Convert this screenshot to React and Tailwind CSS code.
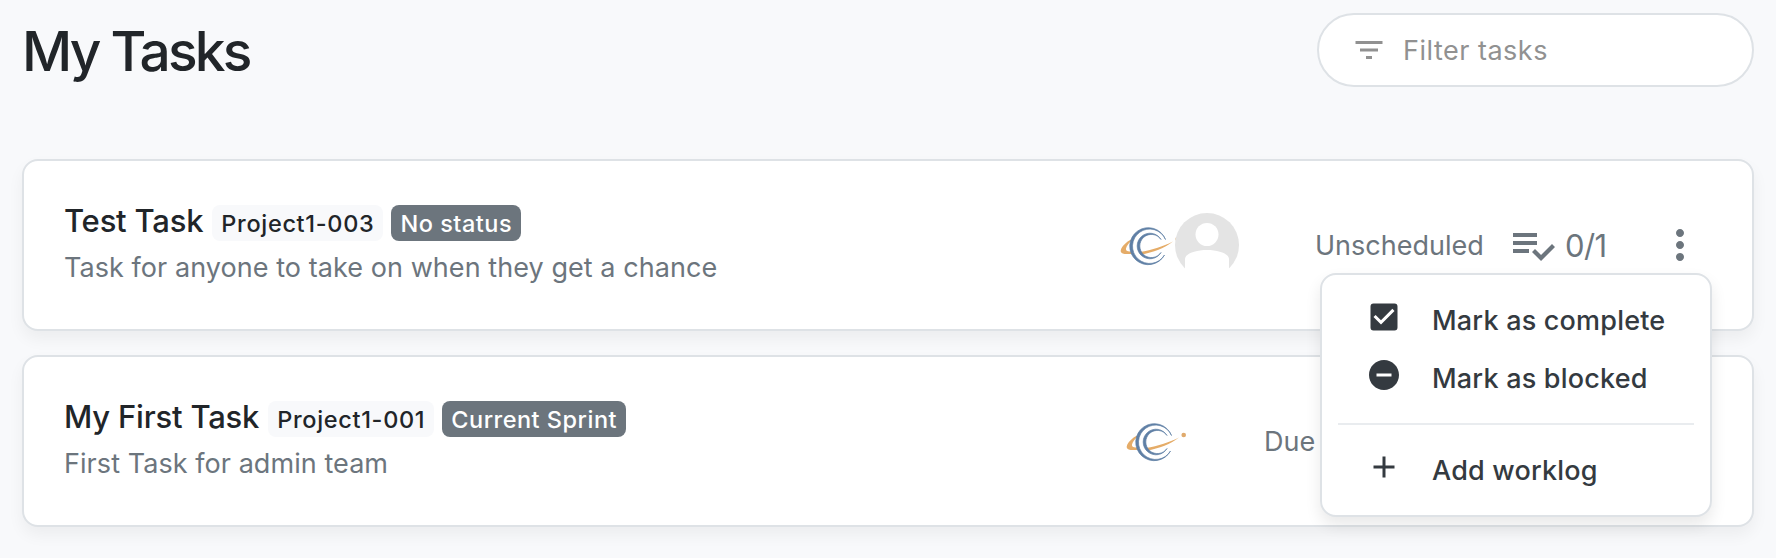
import {
  MdAdd,
  MdCheckBox,
  MdFilterList,
  MdMoreVert,
  MdRemoveCircle,
} from "react-icons/md";

const tasks = [
  {
    id: 1,
    title: "Test Task",
    code: "Project1-003",
    status: "No status",
    description: "Task for anyone to take on when they get a chance",
    due: "Unscheduled",
    progress: "0/1",
    unassigned: true,
  },
  {
    id: 2,
    title: "My First Task",
    code: "Project1-001",
    status: "Current Sprint",
    description: "First Task for admin team",
    due: "Due",
    unassigned: false,
  },
];

function TeamLogo() {
  return (
    <svg viewBox="0 0 64 64" className="h-16 w-16 shrink-0">
      {/* back of the orbit */}
      <path
        d="M16 25.500 C8 29 3 35.500 3.800 38.800 C4.600 41.500 10 41.500 17 40.500 L17 38 C11 39 8.500 38 9 35.500 C9.500 33 12 29.500 16 26.500 Z"
        fill="#e5ac68"
      />
      <circle cx="32" cy="32.700" r="18" fill="#fff" />
      {/* front of the orbit */}
      <path d="M23 39 C35 37 47 33 56 28.500 C48 35 36 39.500 24 41.500 Z" fill="#e5ac68" />
      <g fill="#5f7fa5" stroke="#5f7fa5" strokeWidth="0.7">
        <path d="M48.500 26.500 A18.500 18.500 0 1 0 47.500 42 A17.200 17.200 0 1 1 48.500 26.500 Z" />
        <path d="M44 26.500 A12.800 12.800 0 1 0 44 39.500 A11.600 11.600 0 1 1 44 26.500 Z" />
      </g>
      <circle cx="60.700" cy="26" r="2.300" fill="#e0aa6c" />
    </svg>
  );
}

function UnassignedAvatar() {
  return (
    <svg viewBox="0 0 64 64" className="h-16 w-16 shrink-0">
      <circle cx="32" cy="32" r="32" fill="#e4e4e4" />
      <circle cx="32" cy="21.500" r="11.500" fill="#fff" />
      <path d="M10 64V46C10 41 20 37 32 37S54 41 54 46V64Z" fill="#fff" />
    </svg>
  );
}

function ChecklistIcon() {
  return (
    <svg viewBox="0 0 24 24" fill="currentColor" className="h-12 w-12 shrink-0">
      <path d="M14 10H2v2h12v-2zm0-4H2v2h12V6zM2 16h8v-2H2v2zm19.5-4.5L23 13l-6.99 7-4.51-4.5L13 14l3.01 3 5.49-5.5z" />
    </svg>
  );
}

function MenuItem({ icon: Icon, label }) {
  return (
    <button className="flex h-[58px] w-full items-center pl-11">
      <Icon size={36} className="-mt-1.5" />
      <span className="mt-0.5 ml-[30px] whitespace-nowrap">{label}</span>
    </button>
  );
}

function TaskMenu() {
  return (
    <div className="absolute top-[112px] right-[40px] z-10 h-[244px] w-[392px] rounded-2xl border-2 border-[#dee2e6] bg-white pt-4 text-[27px] font-medium tracking-[0.2px] text-[#343a40] shadow-[0_8px_16px_rgba(0,0,0,0.09)]">
      <MenuItem icon={MdCheckBox} label="Mark as complete" />
      <MenuItem icon={MdRemoveCircle} label="Mark as blocked" />
      <hr className="mx-4 my-4 border-t-2 border-[#e9ecef]" />
      <MenuItem icon={MdAdd} label="Add worklog" />
    </div>
  );
}

function TaskCard({ task, menuOpen }) {
  return (
    <article
      className={`relative flex h-[172px] rounded-2xl border-2 border-[#dee2e6] bg-white pl-[40px] shadow-[0_8px_16px_rgba(0,0,0,0.05)] ${
        menuOpen ? "z-10" : ""
      }`}
    >
      <div className="flex-1 pt-[40px]">
        <div className="flex h-[44px] items-center">
          <h2 className="-mt-1 text-[31px] font-medium tracking-[-0.2px] whitespace-nowrap text-[#212529]">
            {task.title}
          </h2>
          <span className="ml-[9px] flex h-9 items-center rounded-lg bg-[#f8f9fb] px-[9px] pt-0.5 text-[23.5px] font-medium tracking-[0.68px] whitespace-nowrap text-[#212529]">
            {task.code}
          </span>
          <span className="ml-2 flex h-9 items-center rounded-lg bg-[#6c757d] px-[9px] pt-0.5 text-[23.5px] font-medium tracking-[0.5px] whitespace-nowrap text-white">
            {task.status}
          </span>
        </div>
        <p className="mt-[3px] text-[27px] leading-[40px] tracking-[0.06px] whitespace-nowrap text-[#6c757d]">
          {task.description}
        </p>
      </div>

      <div className={`flex pt-[52px] ${task.unassigned ? "w-[197px]" : "w-[141px]"}`}>
        <TeamLogo />
        {task.unassigned && (
          <div className="-ml-[6px]">
            <UnassignedAvatar />
          </div>
        )}
      </div>

      <div
        className={`mt-[60px] flex h-12 items-center text-[27px] whitespace-nowrap text-[#6c757d] ${
          task.unassigned ? "w-[438px]" : "w-[488px]"
        }`}
      >
        <span className={task.unassigned ? "mt-0.5 ml-px w-[194px]" : "mt-0.5"}>{task.due}</span>
        {task.progress && (
          <>
            <ChecklistIcon />
            <span className="mt-0.5 ml-2 w-[91px] text-[31px] tracking-[-0.6px]">{task.progress}</span>
            <MdMoreVert size={48} />
          </>
        )}
      </div>
      {menuOpen && <TaskMenu />}
    </article>
  );
}

export default function App() {
  return (
    <main className="h-[558px] overflow-hidden bg-[#f8f9fb] px-[22px] pt-[13px] font-['Inter',sans-serif]">
      <header className="flex h-[74px] items-center justify-between">
        <h1 className="mt-0.5 text-[55px] font-medium tracking-[-2.8px] whitespace-nowrap text-[#212529]">My Tasks</h1>
        <label className="flex h-[74px] w-[437px] items-center rounded-full border-2 border-[#dee2e6] bg-white pl-8 text-[#919191]">
          <MdFilterList size={36} />
          <input
            className="mt-[3px] ml-4 w-[300px] text-[27px] tracking-[0.5px] outline-none placeholder:text-[#919191]"
            placeholder="Filter tasks"
          />
        </label>
      </header>

      <section className="mt-[72px] flex flex-col gap-6">
        {tasks.map((task, i) => (
          <TaskCard key={task.id} task={task} menuOpen={i === 0} />
        ))}
      </section>
    </main>
  );
}
